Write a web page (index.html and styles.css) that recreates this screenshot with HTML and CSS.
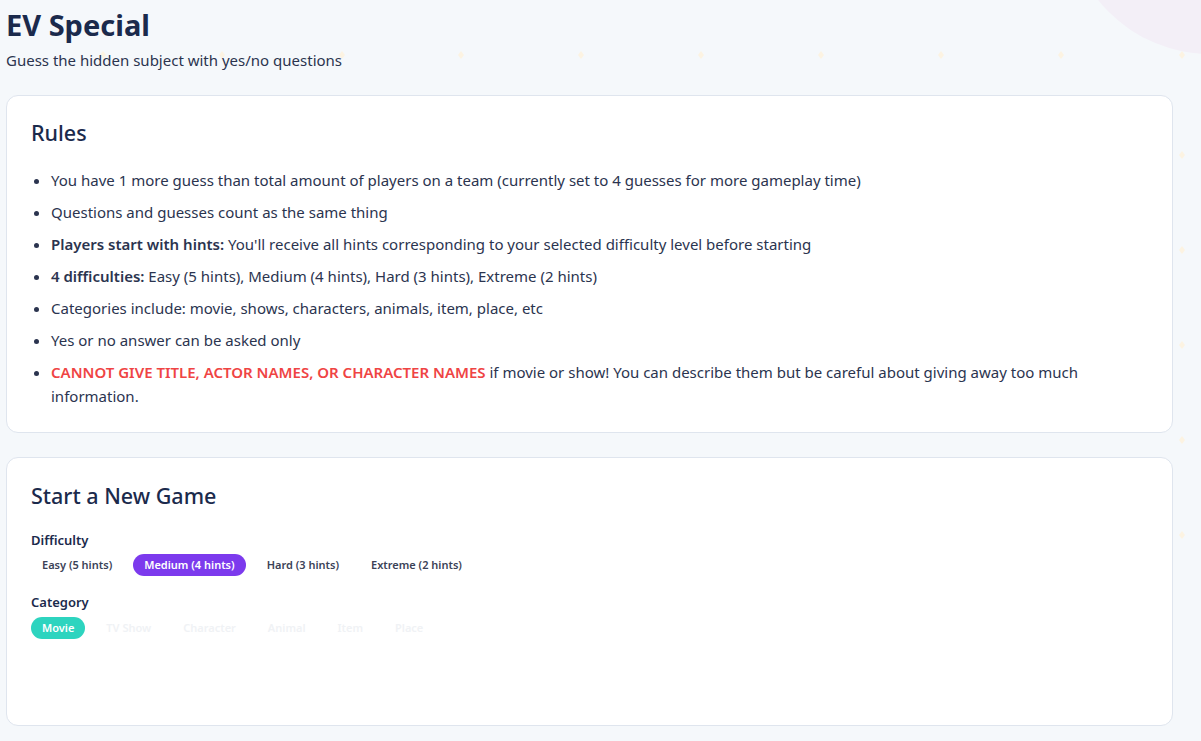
FILE: index.html
```html
<!DOCTYPE html>
<html lang="en">
<head>
<meta charset="utf-8">
<title>EV Special</title>
<link rel="stylesheet" href="styles.css">
</head>
<body>
<div class="bg-deco" aria-hidden="true">
  <svg class="dots" width="1201" height="741" fill="#fcf3e2">
    <path d="M103 51 l3 4 l-3 4 l-3 -4 Z"/>
    <path d="M222 51 l3 4 l-3 4 l-3 -4 Z"/>
    <path d="M342 51 l3 4 l-3 4 l-3 -4 Z"/>
    <path d="M461 51 l3 4 l-3 4 l-3 -4 Z"/>
    <path d="M581 51 l3 4 l-3 4 l-3 -4 Z"/>
    <path d="M701 51 l3 4 l-3 4 l-3 -4 Z"/>
    <path d="M821 51 l3 4 l-3 4 l-3 -4 Z"/>
    <path d="M941 51 l3 4 l-3 4 l-3 -4 Z"/>
    <path d="M1061 51 l3 4 l-3 4 l-3 -4 Z"/>
    <path d="M1182 51 l3 4 l-3 4 l-3 -4 Z"/>
    <path d="M1182 151 l3 4 l-3 4 l-3 -4 Z"/>
    <path d="M1182 246 l3 4 l-3 4 l-3 -4 Z"/>
    <path d="M1182 341 l3 4 l-3 4 l-3 -4 Z"/>
    <path d="M1182 436 l3 4 l-3 4 l-3 -4 Z"/>
    <path d="M1182 531 l3 4 l-3 4 l-3 -4 Z"/>
  </svg>
  <div class="blob"></div>
</div>
<main class="page">
  <header class="header">
    <h1 class="title">EV Special</h1>
    <p class="subtitle">Guess the hidden subject with yes/no questions</p>
  </header>

  <section class="card rules">
    <h2 class="card-title">Rules</h2>
    <ul class="rule-list">
      <li>You have 1 more guess than total amount of players on a team (currently set to 4 guesses for more gameplay time)</li>
      <li>Questions and guesses count as the same thing</li>
      <li><strong>Players start with hints:</strong> You'll receive all hints corresponding to your selected difficulty level before starting</li>
      <li><strong>4 difficulties:</strong> Easy (5 hints), Medium (4 hints), Hard (3 hints), Extreme (2 hints)</li>
      <li>Categories include: movie, shows, characters, animals, item, place, etc</li>
      <li>Yes or no answer can be asked only</li>
      <li><strong class="warn">CANNOT GIVE TITLE, ACTOR NAMES, OR CHARACTER NAMES</strong> if movie or show! You can describe them but be careful about giving away too much information.</li>
    </ul>
  </section>

  <section class="card newgame">
    <h2 class="card-title">Start a New Game</h2>
    <div class="field">
      <div class="label">Difficulty</div>
      <div class="chips">
        <button class="chip">Easy (5 hints)</button>
        <button class="chip chip-purple">Medium (4 hints)</button>
        <button class="chip">Hard (3 hints)</button>
        <button class="chip">Extreme (2 hints)</button>
      </div>
    </div>
    <div class="field">
      <div class="label">Category</div>
      <div class="chips">
        <button class="chip chip-teal">Movie</button>
        <button class="chip chip-faint">TV Show</button>
        <button class="chip chip-faint">Character</button>
        <button class="chip chip-faint">Animal</button>
        <button class="chip chip-faint">Item</button>
        <button class="chip chip-faint">Place</button>
      </div>
    </div>
  </section>
</main>
</body>
</html>
```

FILE: styles.css
```css
* { box-sizing: border-box; }

html, body {
  margin: 0;
  padding: 0;
}

body {
  background: #f5f8fb;
  font-family: "Noto Sans", "Open Sans", sans-serif;
  color: #2b344f;
  width: 1201px;
  height: 741px;
  overflow: hidden;
  position: relative;
}

.bg-deco {
  position: absolute;
  inset: 0;
  pointer-events: none;
  overflow: hidden;
}

.dots {
  position: absolute;
  left: 0;
  top: 0;
}

.blob {
  position: absolute;
  left: 1067px;
  top: -232px;
  width: 286px;
  height: 286px;
  border-radius: 50%;
  background: #f3eff7;
}

.page {
  position: relative;
  padding: 6px 28px 0 6px;
  display: flex;
  flex-direction: column;
}

.header {
  margin-bottom: 24px;
}

.title {
  margin: 0;
  font-size: 29px;
  line-height: 38px;
  font-weight: 700;
  color: #1b2a4c;
}

.subtitle {
  margin: 5px 0 0;
  font-size: 15px;
  line-height: 22px;
  color: #2b344f;
}

.card {
  background: #fff;
  border: 1px solid #dfe5ee;
  border-radius: 12px;
  padding: 22px 24px;
}

.card-title {
  margin: 0;
  font-size: 21.5px;
  line-height: 30px;
  font-weight: 500;
  color: #1b2a4c;
}

.rules {
  margin-bottom: 24px;
  padding-bottom: 24px;
}

.rule-list {
  margin: 20px 0 0;
  padding-left: 20px;
  font-size: 15px;
  line-height: 24px;
}

.rule-list li {
  margin-bottom: 8px;
}

.rule-list li:last-child {
  margin-bottom: 0;
}

.rule-list strong {
  font-weight: 600;
}

.warn {
  color: #ef4444;
}

.newgame {
  height: 269px;
  padding-top: 23px;
}

.newgame .card-title {
  margin-bottom: 20px;
}

.field {
  margin-bottom: 17px;
}

.label {
  font-size: 13px;
  line-height: 18px;
  font-weight: 600;
  color: #1b2a4c;
  margin-bottom: 5px;
}

.field + .field .label {
  margin-bottom: 6px;
}

.chips {
  display: flex;
  gap: 10px;
}

.chip {
  font-family: inherit;
  font-size: 11px;
  font-weight: 600;
  line-height: 16px;
  padding: 3px 11px;
  border: none;
  border-radius: 11px;
  background: transparent;
  color: #3b4257;
}

.chip-purple {
  background: #7c3aed;
  color: #fff;
}

.chip-teal {
  background: #2dd4bf;
  color: #fff;
}

.chip-faint {
  color: #f0f2f5;
}
```
